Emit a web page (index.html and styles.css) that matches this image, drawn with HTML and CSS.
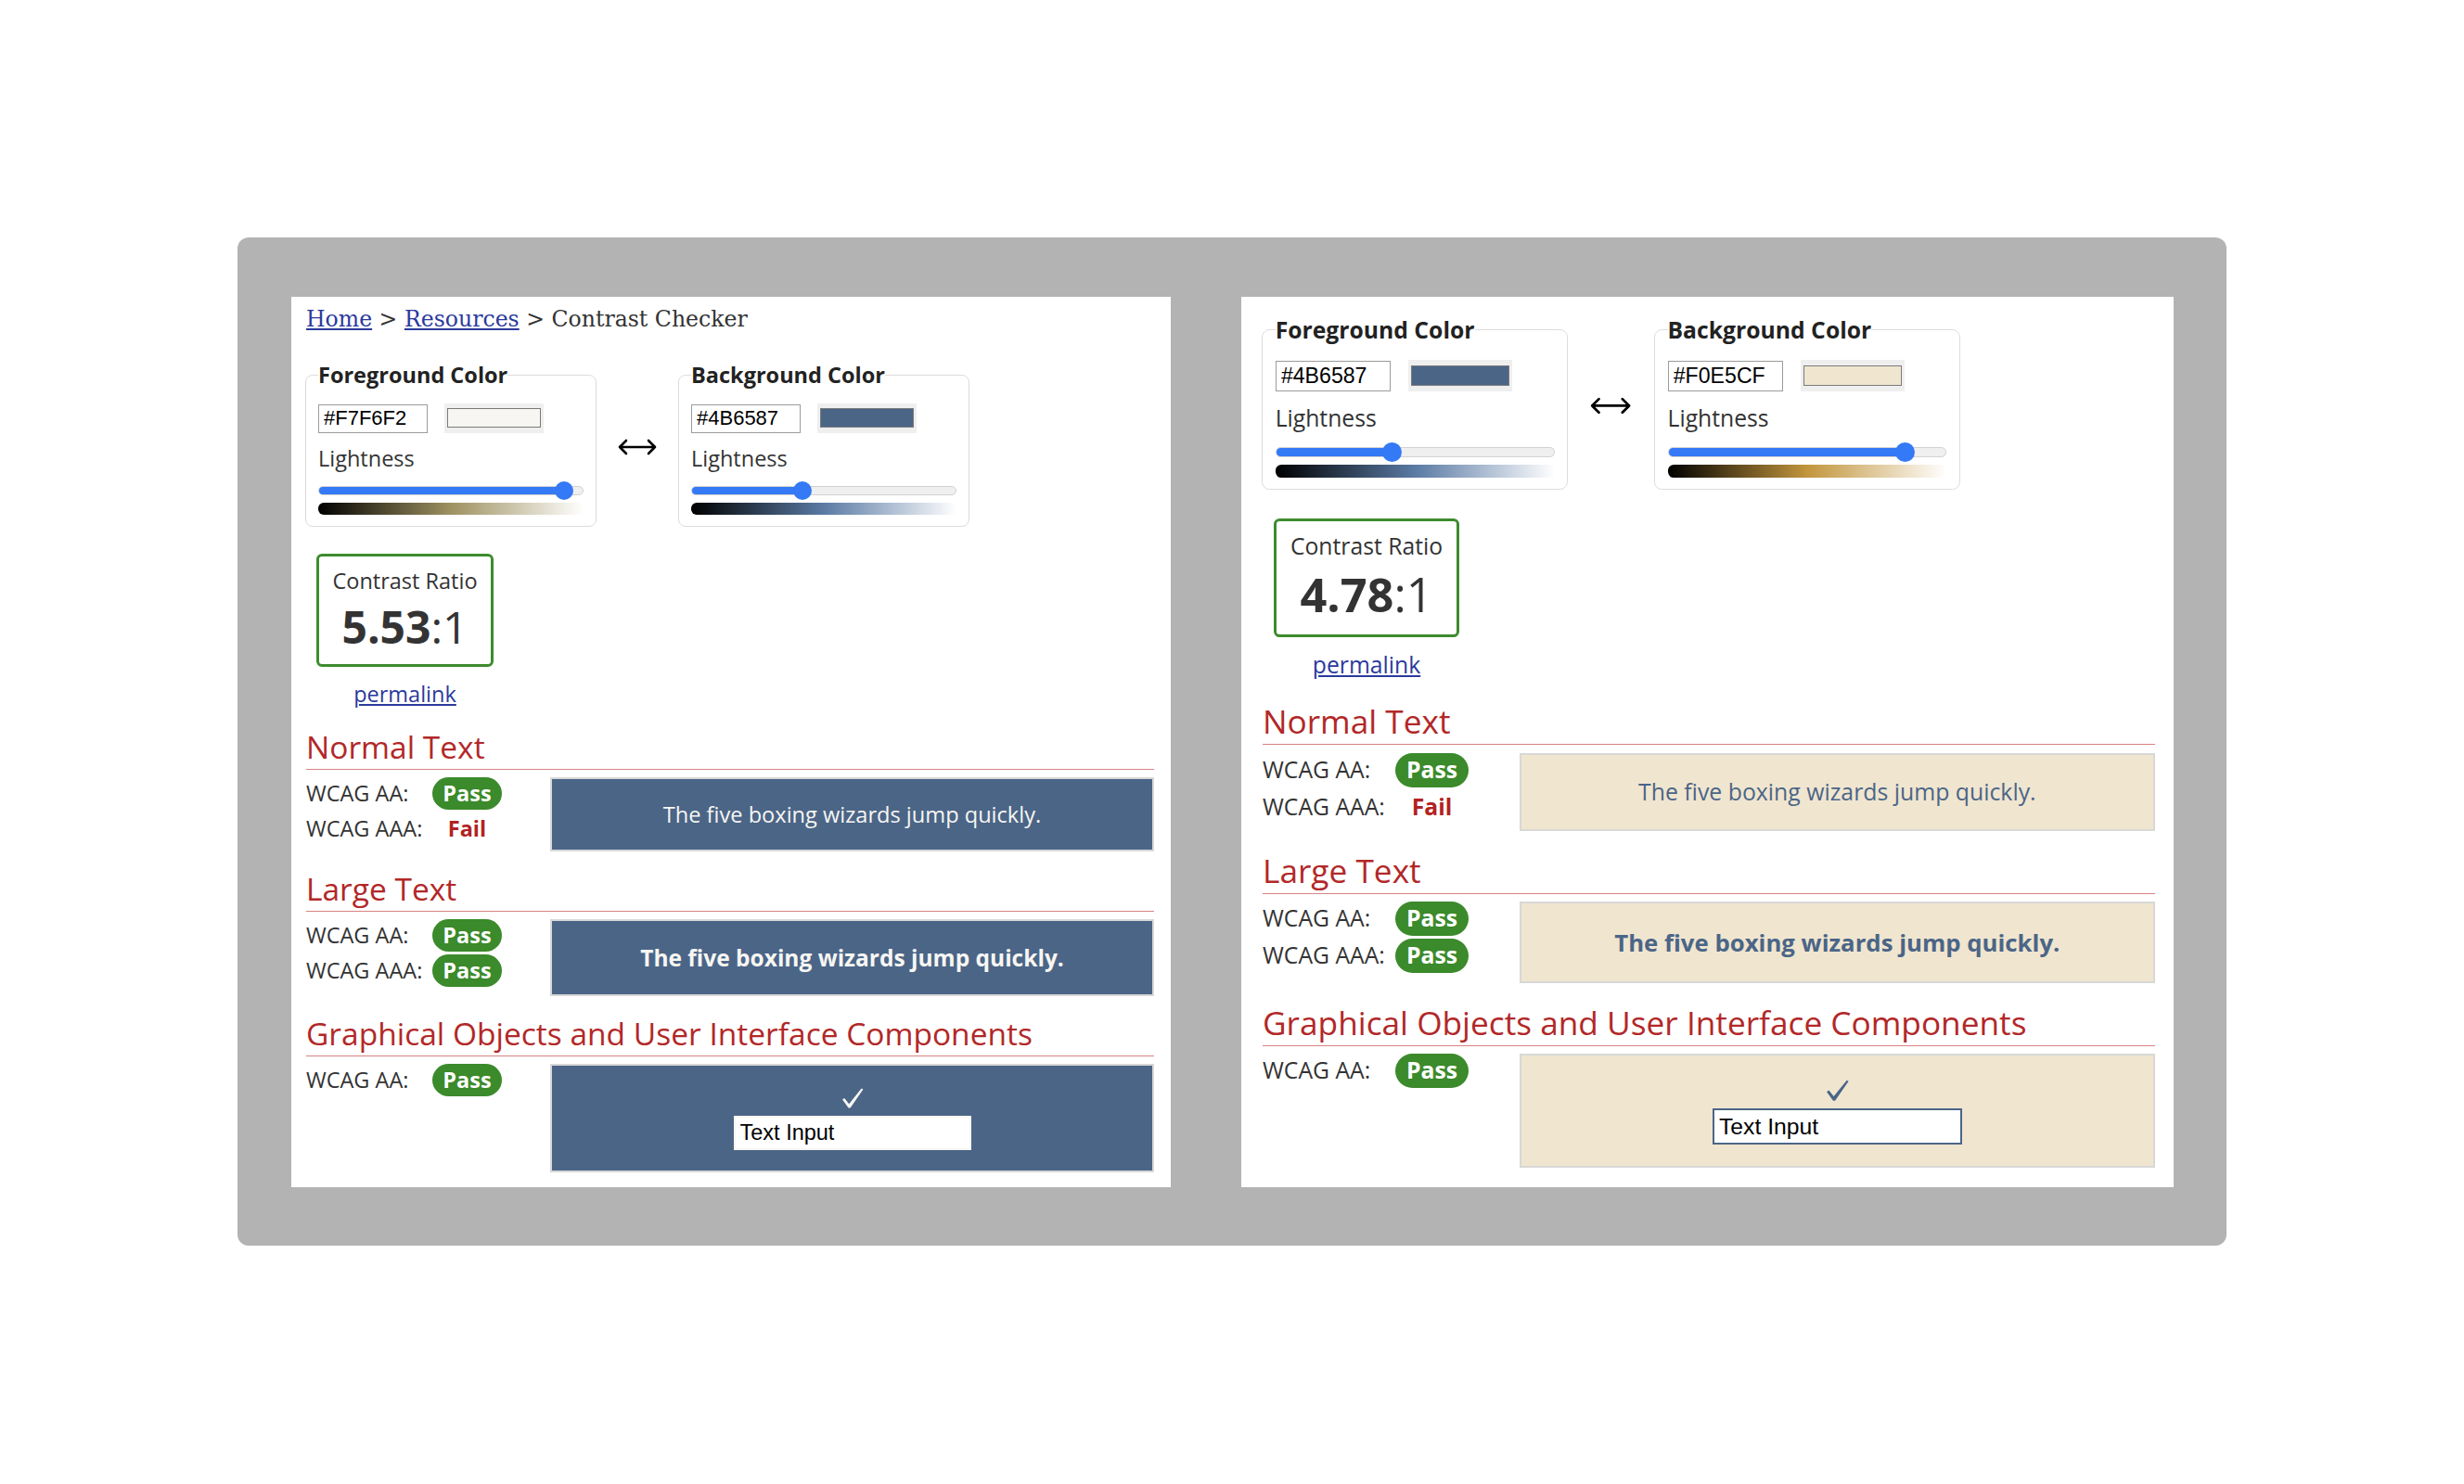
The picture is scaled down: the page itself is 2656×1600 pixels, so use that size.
FILE: index.html
```html
<!DOCTYPE html>
<html lang="en">
<head>
<meta charset="utf-8">
<title>Contrast Checker</title>
<link rel="stylesheet" href="styles.css">
</head>
<body>
<div class="frame">

  <div class="panel panel-left">
    <div class="page">
      <nav class="crumbs"><a href="#">Home</a> &gt; <a href="#">Resources</a> &gt; Contrast Checker</nav>
      <div class="pickers">
        <fieldset class="picker">
          <legend>Foreground Color</legend>
          <div class="hex-row">
            <input class="hex" type="text" value="#F7F6F2" readonly>
            <span class="swatch"><span class="swatch-color" style="background:#F7F6F2"></span></span>
          </div>
          <div class="light-label">Lightness</div>
          <div class="slider">
            <div class="track"><div class="fill" style="width:265px"></div></div>
            <div class="thumb" style="left:265px"></div>
          </div>
          <div class="grad" style="background:linear-gradient(to right,#000,hsl(48,24%,50%),#fff)"></div>
        </fieldset>
        <div class="swap">
          <svg width="44" height="18" viewBox="0 0 44 18"><path d="M3 9H41M10 2L3 9L10 16M34 2L41 9L34 16" stroke="#000" stroke-width="2.6" fill="none" stroke-linecap="round" stroke-linejoin="round"/></svg>
        </div>
        <fieldset class="picker">
          <legend>Background Color</legend>
          <div class="hex-row">
            <input class="hex" type="text" value="#4B6587" readonly>
            <span class="swatch"><span class="swatch-color" style="background:#4B6587"></span></span>
          </div>
          <div class="light-label">Lightness</div>
          <div class="slider">
            <div class="track"><div class="fill" style="width:120px"></div></div>
            <div class="thumb" style="left:120px"></div>
          </div>
          <div class="grad" style="background:linear-gradient(to right,#000,hsl(214,29%,50%),#fff)"></div>
        </fieldset>
      </div>

      <div class="ratio-wrap">
        <div class="ratio-box">
          <div class="ratio-label">Contrast Ratio</div>
          <div class="ratio-value"><b>5.53</b>:1</div>
        </div>
        <a class="permalink" href="#">permalink</a>
      </div>

      <section class="result">
        <h2>Normal Text</h2>
        <div class="result-row">
          <div class="checks">
            <div class="check"><span class="check-label">WCAG AA:</span><span class="pill">Pass</span></div>
            <div class="check"><span class="check-label">WCAG AAA:</span><span class="fail">Fail</span></div>
          </div>
          <div class="sample sample-normal" style="background:#4B6587;color:#F7F6F2">The five boxing wizards jump quickly.</div>
        </div>
      </section>

      <section class="result">
        <h2>Large Text</h2>
        <div class="result-row">
          <div class="checks">
            <div class="check"><span class="check-label">WCAG AA:</span><span class="pill">Pass</span></div>
            <div class="check"><span class="check-label">WCAG AAA:</span><span class="pill">Pass</span></div>
          </div>
          <div class="sample sample-large" style="background:#4B6587;color:#F7F6F2">The five boxing wizards jump quickly.</div>
        </div>
      </section>

      <section class="result">
        <h2>Graphical Objects and User Interface Components</h2>
        <div class="result-row">
          <div class="checks">
            <div class="check"><span class="check-label">WCAG AA:</span><span class="pill">Pass</span></div>
          </div>
          <div class="sample sample-ui" style="background:#4B6587">
            <svg class="tick" width="24" height="22" viewBox="0 0 24 22"><path d="M1 12.5L3.2 11L8.2 17.2L21.6 0.6L23.4 1.6L9.6 21.6L7.6 21.6Z" fill="#F7F6F2"/></svg>
            <input class="ui-input" type="text" value="Text Input" readonly style="border-color:#F7F6F2">
          </div>
        </div>
      </section>
    </div>
  </div>

  <div class="panel panel-right">
    <div class="page page-zoomed">
      <div class="pickers">
        <fieldset class="picker">
          <legend>Foreground Color</legend>
          <div class="hex-row">
            <input class="hex" type="text" value="#4B6587" readonly>
            <span class="swatch"><span class="swatch-color" style="background:#4B6587"></span></span>
          </div>
          <div class="light-label">Lightness</div>
          <div class="slider">
            <div class="track"><div class="fill" style="width:120px"></div></div>
            <div class="thumb" style="left:120px"></div>
          </div>
          <div class="grad" style="background:linear-gradient(to right,#000,hsl(214,29%,50%),#fff)"></div>
        </fieldset>
        <div class="swap">
          <svg width="44" height="18" viewBox="0 0 44 18"><path d="M3 9H41M10 2L3 9L10 16M34 2L41 9L34 16" stroke="#000" stroke-width="2.6" fill="none" stroke-linecap="round" stroke-linejoin="round"/></svg>
        </div>
        <fieldset class="picker">
          <legend>Background Color</legend>
          <div class="hex-row">
            <input class="hex" type="text" value="#F0E5CF" readonly>
            <span class="swatch"><span class="swatch-color" style="background:#F0E5CF"></span></span>
          </div>
          <div class="light-label">Lightness</div>
          <div class="slider">
            <div class="track"><div class="fill" style="width:243px"></div></div>
            <div class="thumb" style="left:243px"></div>
          </div>
          <div class="grad" style="background:linear-gradient(to right,#000,hsl(40,52%,50%),#fff)"></div>
        </fieldset>
      </div>

      <div class="ratio-wrap">
        <div class="ratio-box">
          <div class="ratio-label">Contrast Ratio</div>
          <div class="ratio-value"><b>4.78</b>:1</div>
        </div>
        <a class="permalink" href="#">permalink</a>
      </div>

      <section class="result">
        <h2>Normal Text</h2>
        <div class="result-row">
          <div class="checks">
            <div class="check"><span class="check-label">WCAG AA:</span><span class="pill">Pass</span></div>
            <div class="check"><span class="check-label">WCAG AAA:</span><span class="fail">Fail</span></div>
          </div>
          <div class="sample sample-normal" style="background:#F0E5CF;color:#4B6587">The five boxing wizards jump quickly.</div>
        </div>
      </section>

      <section class="result">
        <h2>Large Text</h2>
        <div class="result-row">
          <div class="checks">
            <div class="check"><span class="check-label">WCAG AA:</span><span class="pill">Pass</span></div>
            <div class="check"><span class="check-label">WCAG AAA:</span><span class="pill">Pass</span></div>
          </div>
          <div class="sample sample-large" style="background:#F0E5CF;color:#4B6587">The five boxing wizards jump quickly.</div>
        </div>
      </section>

      <section class="result">
        <h2>Graphical Objects and User Interface Components</h2>
        <div class="result-row">
          <div class="checks">
            <div class="check"><span class="check-label">WCAG AA:</span><span class="pill">Pass</span></div>
          </div>
          <div class="sample sample-ui" style="background:#F0E5CF">
            <svg class="tick" width="24" height="22" viewBox="0 0 24 22"><path d="M1 12.5L3.2 11L8.2 17.2L21.6 0.6L23.4 1.6L9.6 21.6L7.6 21.6Z" fill="#4B6587"/></svg>
            <input class="ui-input" type="text" value="Text Input" readonly style="border-color:#4B6587">
          </div>
        </div>
      </section>
    </div>
  </div>

</div>
</body>
</html>
```

FILE: styles.css
```css
* { box-sizing: border-box; }

html, body {
  margin: 0;
  background: #fff;
}

body {
  padding: 256px 0 0 256px;
  font-family: "Open Sans", "DejaVu Sans", sans-serif;
  font-size: 23.5px;
  color: #333;
}

.frame {
  display: flex;
  align-items: stretch;
  gap: 76px;
  width: 2144px;
  padding: 64px 57px 63px 58px;
  background: #b3b3b3;
  border-radius: 12px;
}

.panel {
  flex: none;
  background: #fff;
}

.panel-left {
  width: 948px;
  padding: 9px 18px 16px 16px;
}

.panel-right {
  width: 1005px;
  padding: 19px 20px 19px 23px;
}

.page-zoomed {
  zoom: 1.052;
}

/* breadcrumb */
.crumbs {
  font-family: "DejaVu Serif", "Liberation Serif", serif;
  font-size: 23.6px;
  line-height: 30px;
  color: #333;
  margin-bottom: 29px;
}

.crumbs a {
  color: #2b3a9c;
  text-decoration: underline;
}

/* color pickers */
.pickers {
  display: flex;
  align-items: center;
  margin-left: -1px;
}

.picker {
  width: 314px;
  margin: 0;
  padding: 0 13px 12px;
  border: 1px solid #dcdcdc;
  border-radius: 8px;
  min-inline-size: 0;
}

.picker legend {
  padding: 0;
  font-weight: 700;
  font-size: 23.5px;
  line-height: 32px;
  color: #222;
}

.swap {
  width: 88px;
  display: flex;
  justify-content: center;
  padding-top: 8px;
}

.swap svg { display: block; }

.hex-row {
  display: flex;
  align-items: center;
  gap: 18px;
  margin-top: 15px;
}

.hex {
  width: 118px;
  height: 31px;
  margin: 0;
  padding: 0 5px;
  border: 1px solid #9c9c9c;
  border-radius: 0;
  background: #fff;
  font-family: "Liberation Sans", Arial, sans-serif;
  font-size: 22px;
  color: #000;
  outline: none;
}

.swatch {
  display: block;
  width: 107px;
  height: 32px;
  padding: 5px 3px 6px;
  background: #efefef;
}

.swatch-color {
  display: block;
  height: 100%;
  border: 1px solid #7a7a7a;
}

.light-label {
  margin-top: 11px;
  line-height: 33px;
  color: #333;
}

.slider {
  position: relative;
  height: 20px;
  margin-top: 8px;
  padding: 5px 0;
}

.track {
  position: relative;
  height: 10px;
  border: 1px solid #d2d2d2;
  border-radius: 5px;
  background: #efefef;
  overflow: hidden;
}

.fill {
  position: absolute;
  left: -1px;
  top: -1px;
  bottom: -1px;
  background: #3479f6;
  border-radius: 5px;
}

.thumb {
  position: absolute;
  top: 0;
  width: 20px;
  height: 20px;
  margin-left: -10px;
  border-radius: 50%;
  background: #3479f6;
}

.grad {
  height: 13px;
  margin-top: 3px;
  border-radius: 6px;
}

/* contrast ratio */
.ratio-wrap {
  display: inline-flex;
  flex-direction: column;
  align-items: center;
  margin: 29px 0 0 11px;
}

.ratio-box {
  width: 191px;
  padding: 10px 0 8px;
  border: 3px solid #3d8c2e;
  border-radius: 6px;
  text-align: center;
}

.ratio-label {
  line-height: 33px;
  color: #333;
}

.ratio-value {
  font-size: 48px;
  line-height: 65px;
  color: #333;
}

.ratio-value b { font-weight: 700; }

.permalink {
  margin-top: 13px;
  line-height: 33px;
  color: #2b3a9c;
  text-decoration: underline;
}

/* results */
.result h2 {
  margin: 20px 0 0;
  padding-bottom: 4px;
  border-bottom: 1px solid #d98282;
  font-size: 33.5px;
  font-weight: 400;
  line-height: 40px;
  color: #b22828;
}

.result-row {
  display: flex;
  margin-top: 8px;
}

.checks {
  flex: none;
  width: 263px;
  display: flex;
  flex-direction: column;
  gap: 3px;
}

.check {
  display: flex;
  align-items: center;
  height: 35px;
  line-height: 35px;
}

.check-label {
  width: 136px;
  color: #333;
}

.pill {
  width: 75px;
  height: 35px;
  border-radius: 18px;
  background: #3b8a2b;
  color: #fff;
  font-weight: 700;
  text-align: center;
}

.fail {
  width: 75px;
  text-align: center;
  color: #b22222;
  font-weight: 700;
}

.sample {
  flex: 1;
  border: 2px solid #d8d8d8;
  text-align: center;
}

.sample-normal {
  padding: 21px 0;
  font-size: 23.6px;
  line-height: 34px;
}

.sample-large {
  padding: 21px 0;
  font-size: 24.5px;
  font-weight: 700;
  line-height: 37px;
}

.sample-ui {
  display: flex;
  flex-direction: column;
  align-items: center;
  gap: 8px;
  padding: 24px 0 22px;
}

.tick { display: block; }

.ui-input {
  width: 256px;
  height: 37px;
  margin: 0;
  padding: 0 5px;
  border: 2px solid;
  border-radius: 0;
  background: #fff;
  font-family: "Liberation Sans", Arial, sans-serif;
  font-size: 23.5px;
  color: #000;
  outline: none;
}
```
